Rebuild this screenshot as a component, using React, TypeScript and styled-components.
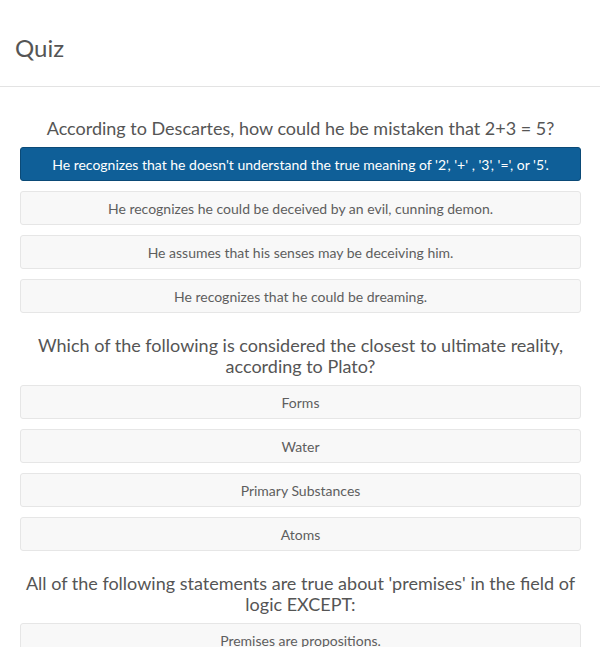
import React from "react";
import styled, { createGlobalStyle } from "styled-components";

const Global = createGlobalStyle`
  html, body { margin: 0; padding: 0; background: #ffffff; }
  body { font-family: Lato, "Open Sans", sans-serif; -webkit-font-smoothing: antialiased; }
`;

const Page = styled.div`
  width: 600px;
  background: #fff;
`;

const Header = styled.header`
  height: 87px;
  border-bottom: 1px solid #e3e3e3;
  display: flex;
  align-items: center;
  padding: 10px 15px 0;
  box-sizing: border-box;
`;

const Title = styled.h1`
  margin: 0;
  font-size: 24px;
  font-weight: 400;
  color: #555;
  line-height: 1;
`;

const Content = styled.main`
  padding: 9px 19px 0 20px;
`;

const Question = styled.section`
  display: flex;
  flex-direction: column;
  gap: 10px;
`;

const Prompt = styled.h2`
  margin: 22px 0 -2px;
  font-size: 18px;
  line-height: 21px;
  font-weight: 400;
  color: #555;
  text-align: center;
`;

const Option = styled.button<{ $selected?: boolean }>`
  height: 34px;
  width: 100%;
  box-sizing: border-box;
  border-radius: 3px;
  font-family: Lato, "Open Sans", sans-serif;
  font-size: 14px;
  font-weight: 400;
  cursor: pointer;
  text-align: center;
  border: 1px solid ${(p) => (p.$selected ? "#0b4a77" : "#e6e6e6")};
  background: ${(p) => (p.$selected ? "#0f5f98" : "#f8f8f8")};
  color: ${(p) => (p.$selected ? "#ffffff" : "#5e5e5e")};
  padding: 0 8px;
`;

const questions = [
  {
    q: "According to Descartes, how could he be mistaken that 2+3 = 5?",
    options: [
      "He recognizes that he doesn't understand the true meaning of '2', '+' , '3', '=', or '5'.",
      "He recognizes he could be deceived by an evil, cunning demon.",
      "He assumes that his senses may be deceiving him.",
      "He recognizes that he could be dreaming.",
    ],
    selected: 0,
  },
  {
    q: "Which of the following is considered the closest to ultimate reality, according to Plato?",
    options: ["Forms", "Water", "Primary Substances", "Atoms"],
    selected: -1,
  },
  {
    q: "All of the following statements are true about 'premises' in the field of logic EXCEPT:",
    options: ["Premises are propositions."],
    selected: -1,
  },
];

export default function App() {
  return (
    <Page>
      <Global />
      <Header>
        <Title>Quiz</Title>
      </Header>
      <Content>
        {questions.map((item, i) => (
          <Question key={i}>
            <Prompt>{item.q}</Prompt>
            {item.options.map((o, j) => (
              <Option key={j} $selected={j === item.selected}>
                {o}
              </Option>
            ))}
          </Question>
        ))}
      </Content>
    </Page>
  );
}
